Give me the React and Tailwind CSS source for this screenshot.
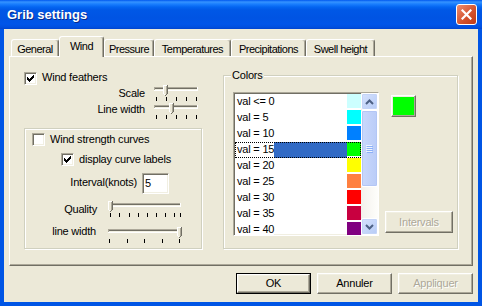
import React from "react";

const sunken =
  "border border-t-[#ACA899] border-l-[#ACA899] border-b-white border-r-white shadow-[inset_1px_1px_0_#716F64,inset_-1px_-1px_0_#F1EFE2]";
const raised =
  "border border-t-white border-l-white border-b-[#716F64] border-r-[#716F64] shadow-[inset_-1px_-1px_0_#ACA899,inset_1px_1px_0_#F1EFE2]";
const etched = "border border-[#D0D0BF] shadow-[inset_1px_1px_0_#ffffff,1px_1px_0_#ffffff]";

const checkCols = [2, 3, 4, 3, 2, 1, 0];

function CheckBox({ checked }) {
  return (
    <div className={`w-[13px] h-[13px] shrink-0 bg-white flex items-center justify-center ${sunken}`}>
      {checked && (
        <svg width="7" height="7" shapeRendering="crispEdges" className="block">
          {checkCols.map((r, i) => (
            <rect key={i} x={i} y={r} width="1" height="3" fill="#000" />
          ))}
        </svg>
      )}
    </div>
  );
}

function Slider({ width, thumb, ticks }) {
  const w = width;
  return (
    <svg width={w} height="16" shapeRendering="crispEdges" className="block shrink-0">
      {/* groove */}
      <rect x="1" y="2" width={w - 2} height="1" fill="#ACA899" />
      <rect x="1" y="2" width="1" height="4" fill="#ACA899" />
      <rect x="2" y="3" width={w - 4} height="1" fill="#716F64" />
      <rect x="2" y="4" width={w - 4} height="1" fill="#F1EFE2" />
      <rect x="1" y="5" width={w - 2} height="1" fill="#ffffff" />
      <rect x={w - 2} y="2" width="1" height="4" fill="#ffffff" />
      {/* thumb */}
      <rect x={thumb} y="0" width="5" height="10" fill="#ECE9D8" />
      <rect x={thumb} y="0" width="1" height="9" fill="#ffffff" />
      <rect x={thumb} y="0" width="4" height="1" fill="#ffffff" />
      <rect x={thumb + 3} y="1" width="1" height="8" fill="#ACA899" />
      <rect x={thumb + 4} y="0" width="1" height="9" fill="#716F64" />
      <rect x={thumb + 1} y="9" width="1" height="1" fill="#ffffff" />
      <rect x={thumb + 3} y="9" width="1" height="1" fill="#716F64" />
      <rect x={thumb + 2} y="10" width="1" height="1" fill="#716F64" />
      {ticks.map((t) => (
        <rect key={t} x={t} y="12" width="1" height="4" fill="#000" />
      ))}
    </svg>
  );
}

function Button({ label, def, disabled, w = "w-[75px]", h = "h-[21px]" }) {
  const text = disabled ? "text-[#ACA899] [text-shadow:1px_1px_0_#ffffff]" : "text-black";
  if (def) {
    return (
      <div className={`${w} ${h} border border-black`}>
        <div className={`w-full h-full flex items-center justify-center ${raised} ${text}`}>{label}</div>
      </div>
    );
  }
  return <div className={`${w} ${h} flex items-center justify-center ${raised} ${text}`}>{label}</div>;
}

const tabs = [
  { label: "General", w: "w-[48px]" },
  { label: "Wind", w: "w-[45px]", sel: true },
  { label: "Pressure", w: "w-[50px]" },
  { label: "Temperatures", w: "w-[77px]" },
  { label: "Precipitations", w: "w-[75px]" },
  { label: "Swell height", w: "w-[69px]" },
];

const rows = [
  { label: "val <= 0", color: "#CCFFFF" },
  { label: "val = 5", color: "#00FFFF" },
  { label: "val = 10", color: "#0080FF" },
  { label: "val = 15", color: "#00FF00", sel: true },
  { label: "val = 20", color: "#FFFF00" },
  { label: "val = 25", color: "#FF8040" },
  { label: "val = 30", color: "#FF0000" },
  { label: "val = 35", color: "#C80040" },
  { label: "val = 40", color: "#800080" },
];

function ScrollButton({ down }) {
  return (
    <div className="w-[17px] h-[17px] shrink-0 rounded-[2px] border border-white bg-[linear-gradient(135deg,#D6E2FD,#B6CBF6)] shadow-[inset_0_0_0_1px_#C4D4F8] flex items-center justify-center">
      <svg width="9" height="6" className="block">
        <polyline
          points={down ? "1,1 4.5,4.5 8,1" : "1,5 4.5,1.5 8,5"}
          fill="none"
          stroke="#4D6185"
          strokeWidth="2"
        />
      </svg>
    </div>
  );
}

function ColorList() {
  return (
    <div className={`w-[146px] h-[144px] bg-white flex overflow-hidden ${sunken}`}>
      <div className="flex-1 flex flex-col pt-[1px] pl-[1px] overflow-hidden">
        {rows.map((r) => (
          <div
            key={r.label}
            className={`h-[16px] shrink-0 flex items-start ${r.sel ? "outline outline-1 outline-dotted outline-black -outline-offset-1" : ""}`}
          >
            <span className="h-[16px] pl-[2px] bg-white leading-[14px] whitespace-nowrap">{r.label}</span>
            <div className={`flex-1 h-[16px] ${r.sel ? "bg-[#316AC5]" : ""}`} />
            <div className="w-[14px] h-[14px]" style={{ backgroundColor: r.color }} />
          </div>
        ))}
      </div>
      <div className="w-[17px] flex flex-col bg-[linear-gradient(90deg,#F3F1EC,#FEFEFB)]">
        <ScrollButton />
        <div className="h-[77px] shrink-0 rounded-[2px] border border-white bg-[linear-gradient(90deg,#C9D8FC,#BACCF7)] shadow-[inset_0_0_0_1px_#B3C6F5] flex items-center justify-center">
          <svg width="7" height="8" shapeRendering="crispEdges" className="block">
            {[0, 2, 4, 6].map((y) => (
              <g key={y}>
                <rect x="0" y={y} width="6" height="1" fill="#EEF4FE" />
                <rect x="1" y={y + 1} width="6" height="1" fill="#8CB0F8" />
              </g>
            ))}
          </svg>
        </div>
        <div className="flex-1" />
        <ScrollButton down />
      </div>
    </div>
  );
}

export default function App() {
  return (
    <div className="w-[482px] h-[306px] flex flex-col bg-[#0055E5] font-['Liberation_Sans',Arial,sans-serif] text-[11px] tracking-[-0.2px] text-black overflow-hidden">
      {/* title bar */}
      <div className="h-[29px] shrink-0 flex items-center pl-[7px] pr-[5px] bg-[linear-gradient(to_bottom,#0058EE_0px,#3593FF_2px,#1A7FFE_4px,#0465F1_7px,#0058E6_10px,#0054E3_18px,#0055E9_24px,#0050E0_27px,#0044D0_29px)]">
        <span className="text-white font-bold text-[13px] tracking-normal [text-shadow:1px_1px_0_#0A2A8A]">Grib settings</span>
        <div className="ml-auto w-[21px] h-[21px] rounded-[3px] border border-white bg-[linear-gradient(135deg,#EE8D6F,#D2502B_60%,#BF3A15)] flex items-center justify-center">
          <svg width="11" height="11" className="block">
            <path d="M1.5 1.5 L9.5 9.5 M9.5 1.5 L1.5 9.5" stroke="#fff" strokeWidth="2.2" strokeLinecap="square" />
          </svg>
        </div>
      </div>

      {/* client area */}
      <div className="flex-1 mx-[4px] mb-[4px] bg-[#ECE9D8] flex flex-col px-[5px] pt-[7px]">
        {/* tabs */}
        <div className="h-[20px] flex items-end pl-[2px] relative z-10 tracking-[-0.5px]">
          {tabs.map((t) =>
            t.sel ? (
              <div
                key={t.label}
                className={`${t.w} h-[21px] -mb-[1px] bg-[#ECE9D8] border-t border-l border-r border-t-white border-l-white border-r-[#716F64] rounded-t-[3px] shadow-[inset_-1px_0_0_#ACA899] flex justify-center pt-[2px] leading-[14px]`}
              >
                {t.label}
              </div>
            ) : (
              <div
                key={t.label}
                className={`${t.w} h-[17px] border-t border-l border-r border-t-white border-l-white border-r-[#716F64] rounded-t-[3px] shadow-[inset_-1px_0_0_#ACA899] flex justify-center pt-[2px] leading-[14px] whitespace-nowrap`}
              >
                {t.label}
              </div>
            )
          )}
        </div>

        {/* panel */}
        <div className="h-[210px] shrink-0 border border-t-white border-l-white border-r-[#716F64] border-b-[#716F64] shadow-[inset_-1px_-1px_0_#ACA899] flex items-start pl-[14px]">
          {/* left column */}
          <div className="w-[178px] flex flex-col pt-[15px]">
            <div className="flex items-start gap-[5px] h-[13px]">
              <CheckBox checked />
              <span className="leading-[14px] -mt-[2px]">Wind feathers</span>
            </div>
            <div className="flex items-start h-[16px]">
              <span className="w-[121px] text-right leading-[14px] mt-[1px]">Scale</span>
              <div className="ml-[8px]">
                <Slider width={46} thumb={10} ticks={[3, 13, 23, 33, 43]} />
              </div>
            </div>
            <div className="flex items-start h-[16px] mt-[2px]">
              <span className="w-[121px] text-right leading-[14px] -mt-[1px]">Line width</span>
              <div className="ml-[8px]">
                <Slider width={46} thumb={16} ticks={[3, 13, 23, 33, 43]} />
              </div>
            </div>

            {/* wind strength group */}
            <div className={`mt-[9px] w-[178px] h-[121px] ${etched} flex flex-col pl-[7px] pt-[4px]`}>
              <div className="flex items-start gap-[5px] h-[13px]">
                <CheckBox />
                <span className="leading-[14px] -mt-[1px]">Wind strength curves</span>
              </div>
              <div className="flex items-start gap-[5px] h-[13px] mt-[7px] ml-[29px]">
                <CheckBox checked />
                <span className="leading-[14px] -mt-[1px]">display curve labels</span>
              </div>
              <div className="flex items-start mt-[7px] -ml-[7px]">
                <span className="w-[112px] text-right leading-[14px] mt-[2px]">Interval(knots)</span>
                <div className={`ml-[5px] w-[27px] h-[21px] bg-white ${sunken} pl-[2px] pt-[2px] leading-[14px]`}>5</div>
              </div>
              <div className="flex items-start mt-[7px] -ml-[7px]">
                <span className="w-[72px] text-right leading-[14px] mt-[1px]">Quality</span>
                <div className="ml-[11px]">
                  <Slider width={74} thumb={0} ticks={[2, 11, 21, 30, 39, 48, 57, 66, 72]} />
                </div>
              </div>
              <div className="flex items-start mt-[10px] -ml-[7px]">
                <span className="w-[71px] text-right leading-[14px] -mt-[3px]">line width</span>
                <div className="ml-[11px]">
                  <Slider width={75} thumb={70} ticks={[2, 20, 37, 55, 72]} />
                </div>
              </div>
            </div>
          </div>

          {/* colors group */}
          <div className={`relative ml-[21px] mt-[18px] w-[235px] h-[174px] ${etched} flex pl-[9px] pt-[16px]`}>
            <span className="absolute -top-[8px] left-[7px] px-[1px] bg-[#ECE9D8] leading-[14px]">Colors</span>
            <ColorList />
            <div className="ml-[6px] w-[68px] flex flex-col">
              <div className={`ml-[6px] mt-[3px] w-[25px] h-[22px] bg-[#00FF00] ${raised}`} />
              <div className="mt-[94px]">
                <Button label="Intervals" disabled w="w-[68px]" h="h-[22px]" />
              </div>
            </div>
          </div>
        </div>

        {/* bottom buttons */}
        <div className="mt-[7px] flex justify-end gap-[6px]">
          <Button label="OK" def />
          <Button label="Annuler" />
          <Button label="Appliquer" disabled />
        </div>
      </div>
    </div>
  );
}
